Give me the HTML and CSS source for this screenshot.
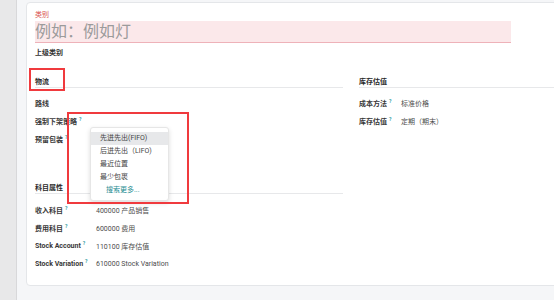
FILE: index.html
```html
<!DOCTYPE html>
<html lang="zh">
<head>
<meta charset="utf-8">
<title>类别</title>
<link rel="stylesheet" href="styles.css">
</head>
<body>
<div class="app">
  <div class="rail"></div>
  <div class="main">
    <div class="card">
      <div class="cat-label">类别</div>
      <div class="title-input">例如：例如灯</div>
      <div class="parent-label">上级类别</div>
      <div class="groups">
        <div class="col">
          <div class="group-head">物流</div>
          <div class="rows">
            <div class="row"><span class="lbl">路线</span></div>
            <div class="row has-menu"><span class="lbl">强制下架策略<sup class="help">?</sup></span>
              <div class="menu">
                <div class="item active">先进先出(FIFO)</div>
                <div class="item">后进先出（LIFO)</div>
                <div class="item">最近位置</div>
                <div class="item">最少包裹</div>
                <div class="item more">搜索更多...</div>
              </div>
            </div>
            <div class="row"><span class="lbl">预留包装<sup class="help">?</sup></span></div>
          </div>
          <div class="group-head second">科目属性</div>
          <div class="rows">
            <div class="row"><span class="lbl">收入科目<sup class="help">?</sup></span><span class="val">400000 产品销售</span></div>
            <div class="row"><span class="lbl">费用科目<sup class="help">?</sup></span><span class="val">600000 费用</span></div>
            <div class="row"><span class="lbl">Stock Account<sup class="help">?</sup></span><span class="val">110100 库存估值</span></div>
            <div class="row"><span class="lbl">Stock Variation<sup class="help">?</sup></span><span class="val">610000 Stock Variation</span></div>
          </div>
        </div>
        <div class="col narrow">
          <div class="group-head">库存估值</div>
          <div class="rows">
            <div class="row"><span class="lbl">成本方法<sup class="help">?</sup></span><span class="val">标准价格</span></div>
            <div class="row"><span class="lbl">库存估值<sup class="help">?</sup></span><span class="val">定期（期末）</span></div>
          </div>
        </div>
      </div>
    </div>
  </div>
  <div class="mark mark-logistics"></div>
  <div class="mark mark-menu"></div>
</div>
</body>
</html>
```
FILE: styles.css
```css
html, body {
  margin: 0;
  padding: 0;
}
body {
  width: 554px;
  height: 300px;
  overflow: hidden;
  font-family: Roboto, "Noto Sans CJK SC", sans-serif;
  color: #3a3a3a;
}
.app {
  position: relative;
  display: flex;
  height: 300px;
  overflow: hidden;
  background: #f5f6f8;
}
.rail {
  width: 16px;
  flex: none;
  background: #e8e8e9;
  border-right: 1px solid #d8d8da;
}
.main {
  flex: 1;
  min-width: 0;
  padding: 2px 0 0 9px;
}
.card {
  box-sizing: border-box;
  width: 700px;
  height: 284px;
  background: #fff;
  border: 1px solid #e4e6e9;
  border-radius: 4px;
  padding: 7px 8px;
}
.cat-label {
  font-size: 7px;
  line-height: 10px;
  color: #d9534f;
}
.title-input {
  margin-top: 1px;
  width: 476px;
  height: 21px;
  line-height: 21px;
  font-size: 16px;
  color: #9b9b9b;
  background: #fbe8ea;
  border-bottom: 1px solid #eeb2b9;
}
.parent-label {
  margin-top: 5px;
  font-size: 7px;
  line-height: 10px;
  font-weight: bold;
  color: #2e2e2e;
}
.groups {
  display: grid;
  grid-template-columns: 308px 308px;
  column-gap: 16px;
  margin-top: 19px;
}
.group-head {
  font-size: 7px;
  line-height: 10px;
  font-weight: bold;
  color: #2a2a2a;
  border-bottom: 1px solid #e7e8ea;
}
.group-head.second {
  margin-top: 35px;
}
.rows {
  margin-top: 6px;
}
.group-head.second + .rows {
  margin-top: 7px;
}
.row {
  display: flex;
  align-items: center;
  height: 18px;
  font-size: 7px;
}
.has-menu {
  position: relative;
}
.lbl {
  width: 61px;
  flex: none;
  font-weight: bold;
  color: #383838;
  white-space: nowrap;
}
.narrow .lbl {
  width: 42px;
}
.val {
  color: #4c4c4c;
  white-space: nowrap;
}
.help {
  font-size: 5px;
  color: #1d9aa0;
  margin-left: 2px;
  font-weight: bold;
  vertical-align: super;
  line-height: 0;
}
.menu {
  position: absolute;
  top: 15px;
  left: 55px;
  width: 79px;
  box-sizing: border-box;
  padding: 4px 0 3px;
  background: #fff;
  border: 1px solid #e6e6e6;
  border-radius: 3px;
  box-shadow: 0 2px 5px rgba(0, 0, 0, 0.14);
  z-index: 2;
}
.item {
  height: 13px;
  line-height: 13px;
  padding-left: 9px;
  font-size: 7px;
  color: #454545;
  white-space: nowrap;
}
.item.active {
  background: #e7e8ea;
}
.item.more {
  padding-left: 15px;
  color: #1f8d92;
}
.mark {
  position: absolute;
  box-sizing: border-box;
  border: 2px solid #f03a3e;
  z-index: 3;
}
.mark-logistics {
  left: 29px;
  top: 68px;
  width: 36px;
  height: 23px;
}
.mark-menu {
  left: 67px;
  top: 112px;
  width: 122px;
  height: 92px;
}
```
